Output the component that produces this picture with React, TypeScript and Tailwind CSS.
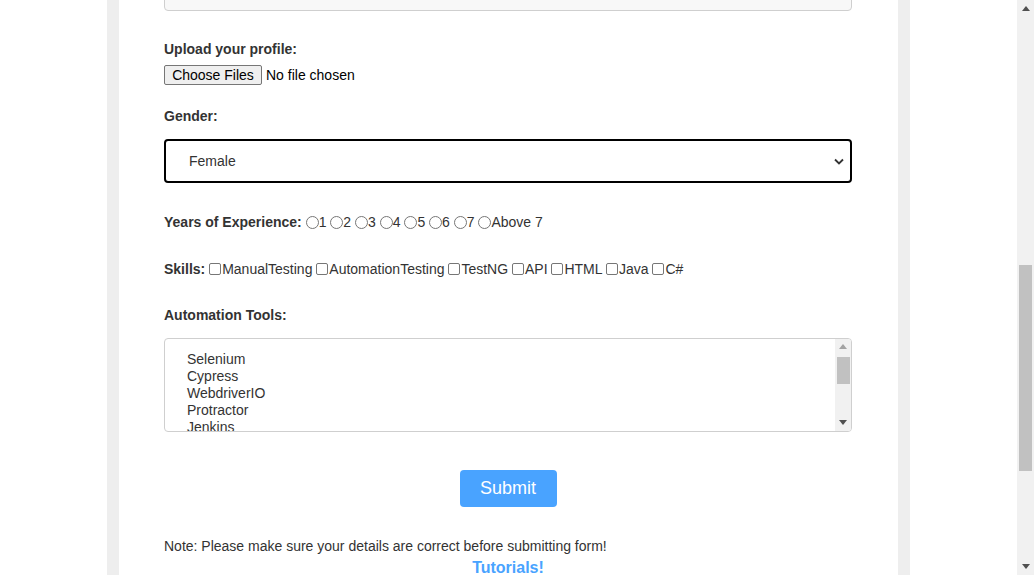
import React from 'react';

const YEARS = ['1', '2', '3', '4', '5', '6', '7', 'Above 7'];
const SKILLS = ['ManualTesting', 'AutomationTesting', 'TestNG', 'API', 'HTML', 'Java', 'C#'];
const TOOLS = ['Selenium', 'Cypress', 'WebdriverIO', 'Protractor', 'Jenkins', 'Cucumber'];

function Radio() {
  return (
    <span className="inline-block w-[13px] h-[13px] rounded-full border border-[#767676] bg-white align-[-2px]" />
  );
}

function Checkbox() {
  return (
    <span className="inline-block w-[12px] h-[12px] rounded-[2px] border border-[#767676] bg-white align-[-1px] mr-px" />
  );
}

function Arrow({ up, className }: { up?: boolean; className?: string }) {
  return (
    <svg width="8" height="5" viewBox="0 0 8 5" className={className}>
      {up ? <path d="M0 5 L4 0 L8 5 Z" fill="currentColor" /> : <path d="M0 0 L4 5 L8 0 Z" fill="currentColor" />}
    </svg>
  );
}

export default function App() {
  return (
    <div className="flex h-[575px] w-[1034px] overflow-hidden bg-white text-[#333] font-['Liberation_Sans',Arial,sans-serif]">
      <div className="flex-1 flex justify-center">
        <div className="w-[803px] bg-[#eeeeee] px-[12px]">
          <div className="h-full overflow-hidden bg-white px-[45px] pr-[46px] text-[14px]">
            {/* Previous field (scrolled off) */}
            <div className="-mt-[26px] h-[37px] rounded-[4px] border border-[#cfcfcf] bg-[#f8f8f8]" />

            {/* Upload */}
            <div className="mt-[30px] font-bold leading-[17px]">Upload your profile:</div>
            <div className="mt-[7px] flex items-center h-[20px]">
              <button
                type="button"
                className="h-[20px] w-[98px] rounded-[2px] border border-[#767676] bg-[#efefef] text-[14px] text-black leading-none"
              >
                Choose Files
              </button>
              <span className="ml-[4px] text-black">No file chosen</span>
            </div>

            {/* Gender */}
            <div className="mt-[23px] font-bold leading-[17px]">Gender:</div>
            <div className="mt-[14px] relative h-[44px] rounded-[4px] border-2 border-black flex items-center pl-[23px]">
              <span className="text-[14px]">Female</span>
              <svg width="10" height="7" viewBox="0 0 10 7" className="absolute right-[6px] top-[17px]">
                <path d="M1 1.5 L5 5.5 L9 1.5" stroke="#333" strokeWidth="1.8" fill="none" />
              </svg>
            </div>

            {/* Years */}
            <div className="mt-[31px] leading-[17px] whitespace-nowrap">
              <span className="font-bold">Years of Experience:</span>
              {YEARS.map(y => (
                <React.Fragment key={y}>
                  {' '}
                  <Radio />
                  {y}
                </React.Fragment>
              ))}
            </div>

            {/* Skills */}
            <div className="mt-[30px] leading-[17px] whitespace-nowrap">
              <span className="font-bold">Skills:</span>
              {SKILLS.map(s => (
                <React.Fragment key={s}>
                  {' '}
                  <Checkbox />
                  {s}
                </React.Fragment>
              ))}
            </div>

            {/* Tools */}
            <div className="mt-[29px] font-bold leading-[17px]">Automation Tools:</div>
            <div className="mt-[14px] relative h-[94px] rounded-[4px] border border-[#cfcfcf] overflow-hidden">
              <div className="pt-[12px] pl-[22px] leading-[17px]">
                {TOOLS.map(t => (
                  <div key={t}>{t}</div>
                ))}
              </div>
              <div className="absolute right-0 top-0 bottom-0 w-[16px] bg-[#f1f1f1] flex flex-col items-center">
                <Arrow up className="mt-[5px] text-[#a3a3a3]" />
                <div className="mt-[8px] w-[13px] h-[27px] bg-[#c1c1c1]" />
                <Arrow className="mt-auto mb-[6px] text-[#505050]" />
              </div>
            </div>

            {/* Submit */}
            <div className="mt-[38px] flex justify-center">
              <button
                type="button"
                className="h-[37px] w-[97px] rounded-[4px] bg-[#49a3ff] text-white text-[18px]"
              >
                Submit
              </button>
            </div>

            <div className="mt-[31px] leading-[17px]">
              Note: Please make sure your details are correct before submitting form!
            </div>
            <div className="mt-[3px] text-center text-[16px] font-bold leading-[19px] text-[#49a3ff]">
              Tutorials!
            </div>
          </div>
        </div>
      </div>

      {/* Page scrollbar */}
      <div className="w-[17px] h-full bg-[#f1f1f1] flex flex-col items-center">
        <Arrow up className="mt-[6px] text-[#505050]" />
        <div className="mt-[254px] w-[13px] h-[206px] bg-[#c1c1c1]" />
        <Arrow className="mt-auto mb-[6px] text-[#505050]" />
      </div>
    </div>
  );
}
